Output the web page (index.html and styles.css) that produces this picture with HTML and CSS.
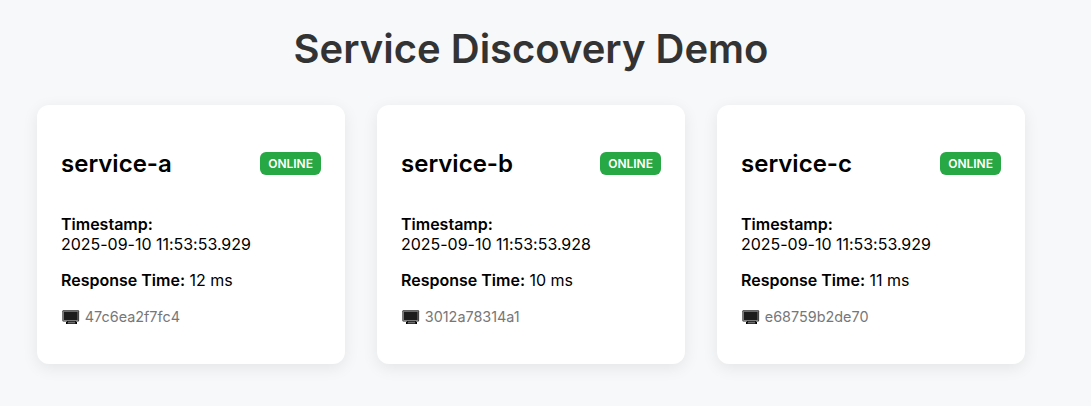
FILE: index.html
```html
<!DOCTYPE html>
<html lang="en">
<head>
<meta charset="utf-8">
<title>Service Discovery Demo</title>
<link rel="stylesheet" href="styles.css">
</head>
<body>
<svg class="defs"><symbol id="desktop" viewBox="0 0 19 16"><path fill="#000" d="M6 11.8h9v1H6zM5 12.8h11v2.2H5z"/><path fill="#ddd" d="M7 12.7h7v.5H7zM6.5 13.7h8v.5h-8z"/><rect x="1.4" y="1.2" width="16.7" height="11.4" rx="1" fill="#222"/><rect x="2.1" y="1.8" width="15.3" height="10.2" rx=".5" fill="#808080"/><rect x="3" y="2.8" width="13.5" height="8.2" fill="#1c1c1c"/></symbol></svg>
<main class="page">
<h1 class="title">Service Discovery Demo</h1>
<div class="services">
<section class="card">
<header class="card-header"><h2 class="name">service-a</h2><span class="badge">ONLINE</span></header>
<p class="row"><strong>Timestamp:</strong><br>2025-09-10 11:53:53.929</p>
<p class="row"><strong>Response Time:</strong> 12 ms</p>
<p class="host"><svg class="icon"><use href="#desktop"/></svg>47c6ea2f7fc4</p>
</section>
<section class="card">
<header class="card-header"><h2 class="name">service-b</h2><span class="badge">ONLINE</span></header>
<p class="row"><strong>Timestamp:</strong><br>2025-09-10 11:53:53.928</p>
<p class="row"><strong>Response Time:</strong> 10 ms</p>
<p class="host"><svg class="icon"><use href="#desktop"/></svg>3012a78314a1</p>
</section>
<section class="card">
<header class="card-header"><h2 class="name">service-c</h2><span class="badge">ONLINE</span></header>
<p class="row"><strong>Timestamp:</strong><br>2025-09-10 11:53:53.929</p>
<p class="row"><strong>Response Time:</strong> 11 ms</p>
<p class="host"><svg class="icon"><use href="#desktop"/></svg>e68759b2de70</p>
</section>
</div>
</main>
</body>
</html>
```
FILE: styles.css
```css
body {
  margin: 0;
  background: #f6f8fa;
  color: #000;
  font: 16px/20px Inter, sans-serif;
}
.defs { display: block; width: 0; height: 0; }
.page { width: 988px; margin-left: 37px; padding: 24px 0 42px; }
.title {
  margin: 0 0 31px;
  color: #333;
  font-size: 40px;
  line-height: 50px;
  font-weight: 600;
  text-align: center;
}
.services { display: grid; grid-template-columns: repeat(3, 1fr); gap: 32px; }
.card {
  box-sizing: border-box;
  height: 259px;
  padding: 24px;
  background: #fff;
  border-radius: 12px;
  box-shadow: 0 4px 16px rgba(0, 0, 0, 0.08);
}
.card-header {
  display: flex;
  align-items: center;
  justify-content: space-between;
  height: 69px;
  margin-bottom: 16px;
}
.name { margin: 0; font-size: 24px; line-height: 30px; font-weight: 600; }
.badge {
  padding: 4px 8px;
  border-radius: 6px;
  background: #28a745;
  color: #fff;
  font-size: 12px;
  line-height: 15px;
  font-weight: 600;
}
.row { margin: 0 0 16px; letter-spacing: -0.02px; }
strong { font-weight: 600; letter-spacing: 0; }
.host {
  display: flex;
  align-items: center;
  gap: 4.8px;
  margin: 17px 0 0;
  color: #777;
  font-size: 14.4px;
}
.icon { width: 19px; height: 16px; }
```
